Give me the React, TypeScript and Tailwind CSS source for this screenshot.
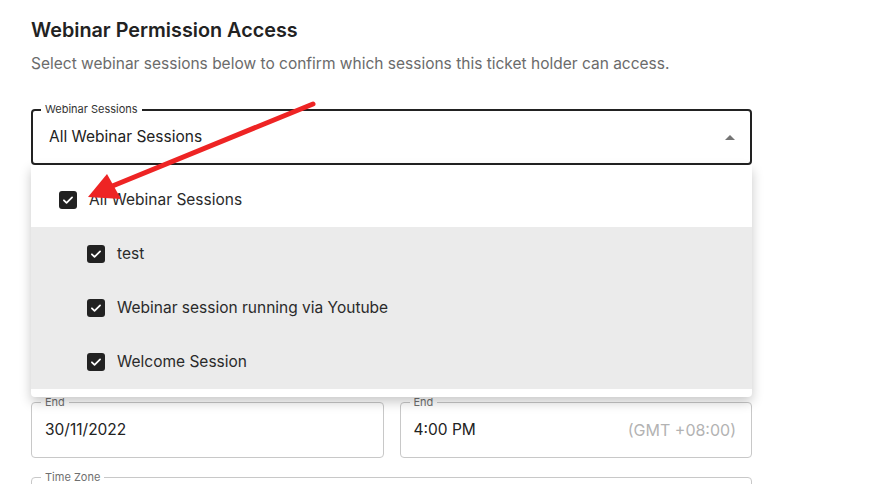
import React from "react";

function Check({ nested = false, label }: { nested?: boolean; label: string }) {
  return (
    <div
      className={
        "flex h-[54px] items-center gap-[12px] " +
        (nested ? "bg-[#ebebeb] pl-[56px]" : "bg-white pl-[28px]")
      }
    >
      <span className="flex h-[18px] w-[18px] items-center justify-center rounded-[3px] bg-[#222222]">
        <svg width="14" height="14" viewBox="0 0 24 24" fill="none">
          <path d="M5 12.5l4.5 4.5L19 7.5" stroke="white" strokeWidth="3" strokeLinecap="round" strokeLinejoin="round" />
        </svg>
      </span>
      <span className="text-[15.5px] text-[#2a2a2a]">{label}</span>
    </div>
  );
}

function Field({ label, value, suffix }: { label: string; value?: string; suffix?: string }) {
  return (
    <div className="relative flex h-[56px] items-center justify-between rounded-[4px] border border-[#c8c8c8] pl-[13px] pr-[15px]">
      <span className="absolute -top-[8px] left-[9px] bg-white px-[4px] text-[11px] leading-[14px] text-[#6f6f6f]">
        {label}
      </span>
      <span className="text-[15.5px] text-[#222222]">{value}</span>
      {suffix && <span className="text-[16px] text-[#b3b3b3]">{suffix}</span>}
    </div>
  );
}

export default function App() {
  return (
    <div
      className="relative h-[484px] w-[895px] overflow-hidden bg-white"
      style={{ fontFamily: "Inter, 'Noto Sans', sans-serif" }}
    >
      <div className="w-[752px] pl-[31px] pt-[18px]">
        <h1 className="text-[19.8px] font-semibold leading-[24px] text-[#222222]">Webinar Permission Access</h1>
        <p className="mt-[12px] text-[15.5px] leading-[20px] text-[#6b6b6b]">
          Select webinar sessions below to confirm which sessions this ticket holder can access.
        </p>

        <div className="relative mt-[35px]">
          <div className="relative flex h-[56px] items-center justify-between rounded-[4px] border-2 border-[#222222] pl-[16px] pr-[14px]">
            <span className="absolute -top-[9px] left-[8px] bg-white px-[4px] text-[11px] leading-[14px] text-[#333333]">
              Webinar Sessions
            </span>
            <span className="text-[15.5px] text-[#222222]">All Webinar Sessions</span>
            <svg width="10" height="5" viewBox="0 0 10 5" className="mr-[1px]">
              <path d="M0 5L5 0L10 5Z" fill="#757575" />
            </svg>
          </div>

          <div className="mt-[237px] grid grid-cols-2 gap-[16px]">
            <Field label="End" value="30/11/2022" />
            <Field label="End" value="4:00 PM" suffix="(GMT +08:00)" />
          </div>

          <div className="mt-[19px]">
            <Field label="Time Zone" value="" />
          </div>

          <div className="absolute left-0 right-0 top-[56px] rounded-b-[4px] bg-white py-[8px] shadow-[0_5px_12px_rgba(0,0,0,0.22)]">
            <Check label="All Webinar Sessions" />
            <Check nested label="test" />
            <Check nested label="Webinar session running via Youtube" />
            <Check nested label="Welcome Session" />
          </div>
        </div>
      </div>

      <svg className="pointer-events-none absolute left-0 top-0" width="895" height="484">
        <line x1="313" y1="104" x2="110" y2="187" stroke="#ee2424" strokeWidth="5" strokeLinecap="round" />
        <path d="M88 197 L107 174 L121 199 Z" fill="#ee2424" />
      </svg>
    </div>
  );
}
